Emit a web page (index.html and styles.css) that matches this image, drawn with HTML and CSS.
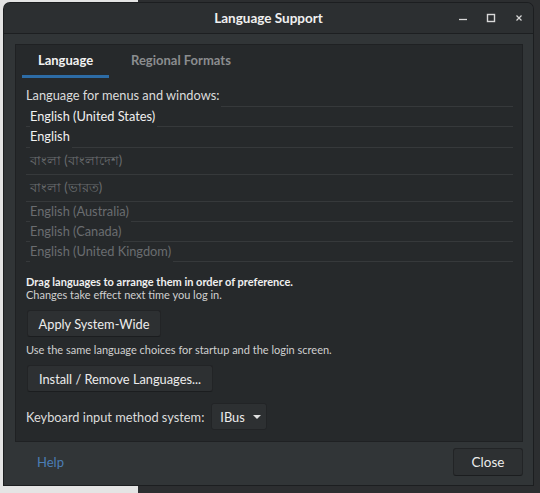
FILE: index.html
```html
<!DOCTYPE html>
<html lang="en">
<head>
    <meta charset="UTF-8">
    <title>Language Support</title>
    <link rel="stylesheet" href="styles.css">
</head>
<body>
    <div class="window">
        <div class="titlebar">
            <span class="title">Language Support</span>
            <div class="controls">
                <svg width="12" height="12" viewBox="0 0 12 12"><path d="M2 7.5h8" stroke="#d8d8d8" stroke-width="1.3"/></svg>
                <svg width="12" height="12" viewBox="0 0 12 12"><rect x="2.5" y="2.5" width="7" height="7" fill="none" stroke="#d8d8d8" stroke-width="1.4"/></svg>
                <svg width="12" height="12" viewBox="0 0 12 12"><path d="M3.5 3.5l5 5M8.5 3.5l-5 5" stroke="#d8d8d8" stroke-width="1.2"/></svg>
            </div>
        </div>

        <div class="body">
            <div class="notebook">
                <div class="tabs">
                    <div class="tab active">Language</div>
                    <div class="tab">Regional Formats</div>
                </div>

                <div class="page">
                    <div class="list-heading"><span>Language for menus and windows:</span></div>
                    <div class="lang-list">
                        <div class="row on"><span>English (United States)</span></div>
                        <div class="row on r2"><span>English</span></div>
                        <div class="row bn"><span>বাংলা (বাংলাদেশ)</span></div>
                        <div class="row bn"><span>বাংলা (ভারত)</span></div>
                        <div class="row"><span>English (Australia)</span></div>
                        <div class="row"><span>English (Canada)</span></div>
                        <div class="row"><span>English (United Kingdom)</span></div>
                    </div>

                    <p class="hint bold">Drag languages to arrange them in order of preference.</p>
                    <p class="hint">Changes take effect next time you log in.</p>
                    <button class="btn apply">Apply System-Wide</button>
                    <p class="hint note">Use the same language choices for startup and the login screen.</p>
                    <button class="btn install">Install / Remove Languages...</button>

                    <div class="input-method">
                        <span>Keyboard input method system:</span>
                        <div class="combo">IBus <span class="arrow"></span></div>
                    </div>
                </div>
            </div>

            <div class="footer">
                <a class="help">Help</a>
                <button class="btn close">Close</button>
            </div>
        </div>
    </div>
</body>
</html>
```

FILE: styles.css
```css
* {
    margin: 0;
    padding: 0;
    box-sizing: border-box;
}

body {
    width: 540px;
    height: 493px;
    overflow: hidden;
    font-family: Lato, "Open Sans", sans-serif;
    background: linear-gradient(90deg, #e4e4e4 0, #e4e4e4 138px, #2c2e30 138px, #2c2e30 100%);
    padding: 3px 7px 8px 4px;
}

.window {
    width: 529px;
    height: 482px;
    background: #313537;
    border-radius: 6px 6px 0 0;
    display: flex;
    flex-direction: column;
    box-shadow: 0 0 0 1px #1c1e20;
}

/* Title bar */
.titlebar {
    height: 31px;
    background: #2c2f31;
    border-bottom: 1px solid #1d1f21;
    border-radius: 6px 6px 0 0;
    display: flex;
    align-items: center;
    justify-content: center;
    position: relative;
}

.title {
    color: #f0f0f0;
    font-weight: bold;
    font-size: 13.5px;
}

.controls {
    position: absolute;
    right: 8px;
    top: 9px;
    display: flex;
    gap: 16px;
}

/* Body */
.body {
    flex: 1;
    display: flex;
    flex-direction: column;
    padding: 10px 10px 0 11px;
}

.notebook {
    height: 398px;
    background: #26292b;
    border: 1px solid #1f2123;
    display: flex;
    flex-direction: column;
}

.tabs {
    height: 33px;
    flex-shrink: 0;
    display: flex;
    padding-left: 6px;
}

.tab {
    font-size: 13px;
    font-weight: bold;
    color: #8b8d8f;
    padding: 7px 22px 0;
    text-align: center;
}

.tab.active {
    color: #f2f2f2;
    width: 87px;
    padding: 7px 0 0;
    border-bottom: 3px solid #2d6ca6;
}

.page {
    padding: 8px 9px 0 10px;
    color: #dcdcdc;
}

.list-heading {
    font-size: 12.8px;
    line-height: 19px;
    height: 21px;
    border-bottom: 1px solid #36393b;
}

.list-heading span,
.row span {
    background: #26292b;
    padding: 0 2px 4px 0;
}

.lang-list {
    font-size: 12.8px;
}

.row {
    height: 20px;
    line-height: 19px;
    padding-left: 4px;
    border-bottom: 1px solid #36393b;
    color: #6a6d70;
}

.row.on {
    color: #f0f0f0;
}

.row.r2 {
    height: 21px;
}

.row.bn {
    height: 27px;
    line-height: 25px;
}

.hint {
    font-size: 11px;
    line-height: 13px;
    color: #d0d0d0;
}

.hint.bold {
    font-weight: bold;
    color: #f0f0f0;
    margin-top: 13px;
}

.hint.note {
    margin-top: 6px;
}

.btn {
    font-family: inherit;
    font-size: 12.8px;
    color: #ececec;
    background: #2d3032;
    border: 1px solid #222426;
    border-bottom-color: #1b1d1f;
    border-radius: 3px;
    height: 27px;
    padding: 0;
    white-space: nowrap;
    cursor: pointer;
}

.btn.apply {
    width: 134px;
    margin: 9px 0 0 1px;
}

.btn.install {
    width: 186px;
    margin: 9px 0 0 1px;
}

.input-method {
    display: flex;
    align-items: center;
    gap: 7px;
    margin-top: 11px;
    font-size: 12.8px;
}

.combo {
    width: 56px;
    height: 27px;
    background: #2d3032;
    border: 1px solid #222426;
    border-radius: 3px;
    display: flex;
    align-items: center;
    padding-left: 8px;
    gap: 8px;
    color: #ececec;
}

.arrow {
    width: 0;
    height: 0;
    border-left: 4px solid transparent;
    border-right: 4px solid transparent;
    border-top: 4px solid #e0e0e0;
}

/* Footer */
.footer {
    flex: 1;
    display: flex;
    align-items: center;
    justify-content: space-between;
    padding: 0 0 3px 22px;
}

.help {
    color: #4b7db5;
    font-size: 13px;
}

.btn.close {
    width: 70px;
    height: 28px;
    font-size: 13.5px;
}
```
